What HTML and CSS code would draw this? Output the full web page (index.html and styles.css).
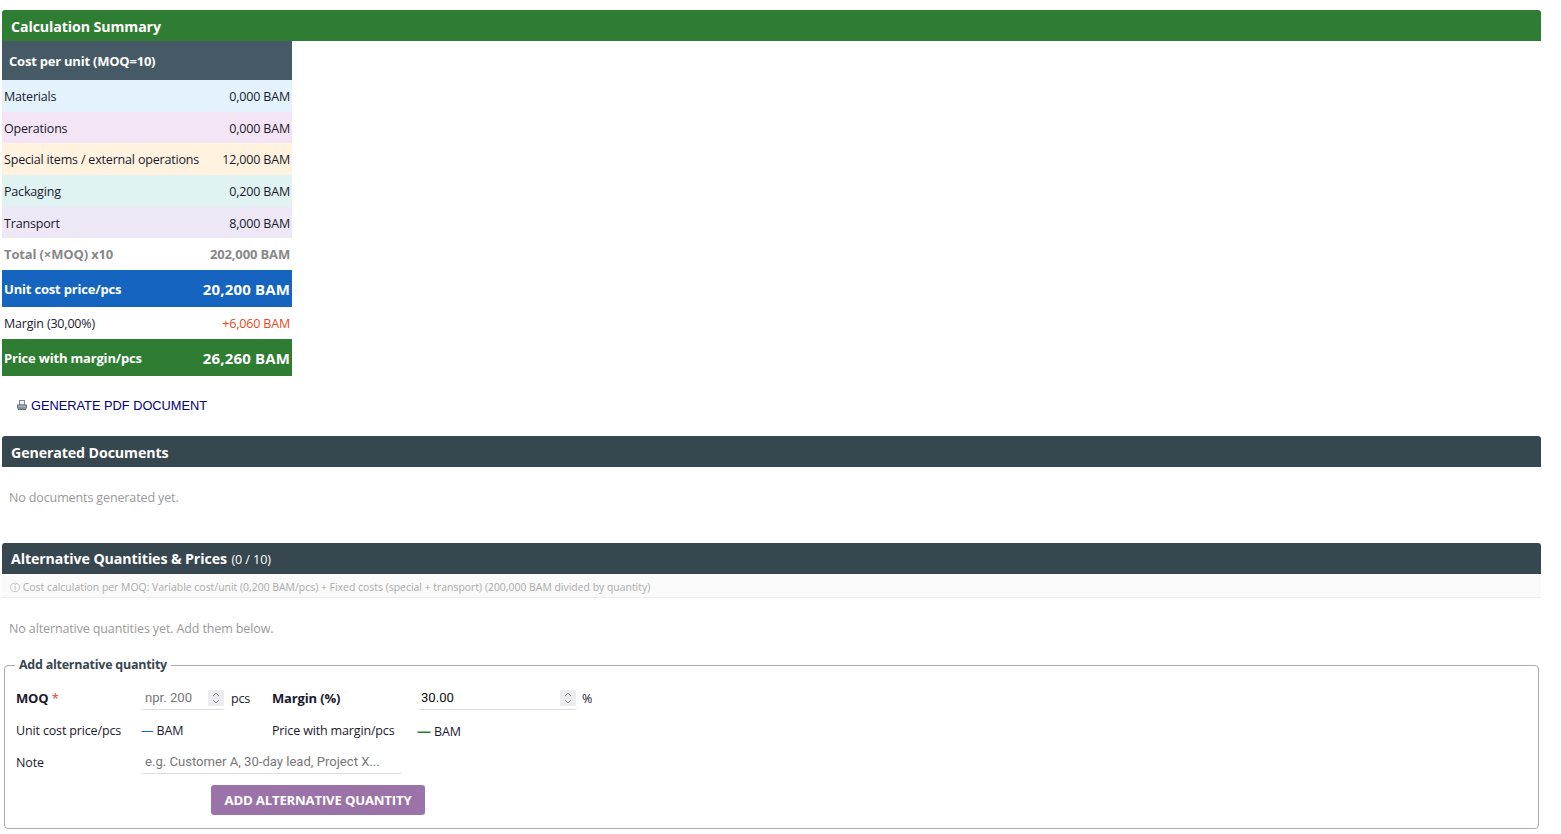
FILE: index.html
```html
<!DOCTYPE html>
<html lang="en">
<head>
    <meta charset="UTF-8">
    <title>Calculation Summary</title>
    <link rel="stylesheet" href="styles.css">
</head>
<body>

    <section class="block">
        <h2 class="head head_green">Calculation Summary</h2>
        <div class="summary">
            <div class="summary_title">Cost per unit (MOQ=10)</div>
            <div class="row c_blue"><span>Materials</span><span>0,000 BAM</span></div>
            <div class="row c_purple"><span>Operations</span><span>0,000 BAM</span></div>
            <div class="row c_orange"><span>Special items / external operations</span><span>12,000 BAM</span></div>
            <div class="row c_teal"><span>Packaging</span><span>0,200 BAM</span></div>
            <div class="row c_violet"><span>Transport</span><span>8,000 BAM</span></div>
            <div class="row total"><span>Total (×MOQ) x10</span><span>202,000 BAM</span></div>
            <div class="row big big_blue"><span>Unit cost price/pcs</span><span class="big_val">20,200 BAM</span></div>
            <div class="row margin"><span>Margin (30,00%)</span><span class="margin_val">+6,060 BAM</span></div>
            <div class="row big big_green"><span>Price with margin/pcs</span><span class="big_val">26,260 BAM</span></div>
        </div>
        <button class="pdf">
            <svg width="10" height="10" viewBox="0 0 10 10">
                <rect x="2.5" y="0.5" width="5" height="4.5" fill="#eef1f5" stroke="#7a8794"/>
                <rect x="0.5" y="5" width="9" height="3" fill="#aab4c0" stroke="#66727f"/>
                <rect x="1" y="8.5" width="8" height="1.5" fill="#5a6673"/>
            </svg>
            GENERATE PDF DOCUMENT
        </button>
    </section>

    <section class="block docs">
        <h2 class="head">Generated Documents</h2>
        <p class="empty">No documents generated yet.</p>
    </section>

    <section class="block alt">
        <h2 class="head">Alternative Quantities &amp; Prices <small>(0 / 10)</small></h2>
        <p class="info">ⓘ Cost calculation per MOQ: Variable cost/unit (0,200 BAM/pcs) + Fixed costs (special + transport) (200,000 BAM divided by quantity)</p>
        <p class="empty empty_alt">No alternative quantities yet. Add them below.</p>

        <fieldset class="add">
            <legend>Add alternative quantity</legend>
            <div class="form">
                <label class="strong">MOQ <i>*</i></label>
                <div class="with_unit with_unit_moq">
                    <div class="field field_moq">
                        <input type="text" placeholder="npr. 200">
                        <span class="spin"><svg width="8" height="12" viewBox="0 0 8 12"><path d="M1 4l3-3 3 3M1 8l3 3 3-3" fill="none" stroke="#8f8f99" stroke-width="1"/></svg></span>
                    </div>
                    <span>pcs</span>
                </div>
                <label class="strong">Margin (%)</label>
                <div class="with_unit">
                    <div class="field field_margin">
                        <input type="text" value="30.00">
                        <span class="spin"><svg width="8" height="12" viewBox="0 0 8 12"><path d="M1 4l3-3 3 3M1 8l3 3 3-3" fill="none" stroke="#8f8f99" stroke-width="1"/></svg></span>
                    </div>
                    <span>%</span>
                </div>

                <label>Unit cost price/pcs</label>
                <div class="calc"><b class="dash">—</b> BAM</div>
                <label>Price with margin/pcs</label>
                <div class="calc"><b class="dash dash_green">—</b> BAM</div>

                <label>Note</label>
                <div class="field field_note">
                    <input type="text" placeholder="e.g. Customer A, 30-day lead, Project X...">
                </div>
            </div>
            <button class="add_btn">ADD ALTERNATIVE QUANTITY</button>
        </fieldset>
    </section>

</body>
</html>
```

FILE: styles.css
```css
html, body{ margin:0; padding:0; background:#fff;}
body{ padding:10px 20px 0 2px; font-family:'Open Sans', 'Noto Sans', sans-serif; font-size:12.5px; color:#1a1a2e;}
h2, p{ margin:0;}
button{ border:0; background:transparent; cursor:pointer;}

.head{
    height:31px; line-height:33px; padding-left:9px;
    background:#37474f; color:#fff;
    font-size:14.2px; font-weight:700; border-radius:3px 3px 0 0;
    letter-spacing:-0.1px;
}
.head small{ font-size:12.6px; font-weight:400; line-height:1; margin-left:1px;}
.head_green{ background:#2e7d32;}

.summary{ width:290px;}
.summary_title{
    height:39px; line-height:41px; padding-left:7px;
    background:#455a64; color:#fff; font-weight:700; font-size:13px; letter-spacing:-0.22px;
}
.row{
    display:flex; justify-content:space-between; align-items:center;
    box-sizing:border-box; height:31.7px; padding:1px 2px 0; letter-spacing:-0.18px;
}
.c_blue{ background:#e3f2fd;}
.c_purple{ background:#f3e5f5;}
.c_orange{ background:#fff3e0;}
.c_teal{ background:#e0f2f1;}
.c_violet{ background:#ede7f6;}
.total{ color:#888; font-weight:700; font-size:13px; padding-top:0; letter-spacing:-0.14px;}
.big{ height:37px; color:#fff; font-weight:700; font-size:13px; padding-top:0;}
.big_blue{ background:#1565c0;}
.big_green{ background:#2e7d32;}
.big_val{ font-size:15px; letter-spacing:0.15px;}
.margin{ height:32px; padding-top:0;}
.margin_val{ color:#e64a19;}

.pdf{
    display:flex; align-items:center; gap:4px;
    margin:19px 0 0 15px; padding:0; height:20px;
    font-family:'Liberation Sans', Arial, sans-serif; font-size:12.8px; color:#000080;
}

.docs{ margin-top:21px;}
.empty{ color:#999; font-size:12.5px; letter-spacing:-0.12px; padding-left:7px;}
.docs .empty{ padding-top:22px; height:54px; box-sizing:border-box;}
.alt{ margin-top:22px;}
.alt .head{ line-height:32px;}

.info{
    height:23px; line-height:27px; padding-left:8px;
    background:#fafafa; border-bottom:1px solid #eee;
    color:#aaa; font-size:10.4px; letter-spacing:0.015px;
}
.empty_alt{ margin-top:22px; line-height:17px;}

.add{
    margin:19px 2px 0 2px; padding:8px 11px 13px 11px;
    border:1px solid #aaa; border-radius:4px; width:auto;
}
.add legend{
    margin-left:-1px; padding:0 4px;
    font-weight:700; font-size:12.5px; line-height:18px; color:#37474f; letter-spacing:-0.25px;
}
.form{
    display:grid; grid-template-columns:125px 131px 145px 1fr;
    grid-auto-rows:32px; align-items:center;
    font-size:12.5px; letter-spacing:-0.15px;
}
.strong{ font-weight:700; font-size:13px;}
.strong i{ color:#e53935; font-style:normal; font-weight:400;}
.with_unit{ display:flex; align-items:center; gap:5px;}
.with_unit_moq{ gap:6px;}
.field{
    display:flex; align-items:center; justify-content:space-between;
    height:23px; border-bottom:1px solid #ddd; border-radius:0 0 3px 3px;
}
.field input{
    flex:1; min-width:0; width:0; height:20px; border:0; outline:0; padding:0 4px; background:transparent;
    font-family:'Roboto', 'Liberation Sans', sans-serif; font-size:13.1px; color:#111;
}
.field input::placeholder{ color:#777;}
.field_moq{ width:84px;}
.field_margin{ width:160px;}
.field_note{ width:261px;}
.spin{
    display:flex; align-items:center; justify-content:center;
    width:16px; height:16px; margin-right:1px; background:#ebebf0;
}
.dash{ color:#1565c0; font-weight:400;}
.dash_green{ color:#2e7d32; font-weight:700; font-size:14px;}
.add_btn{
    display:block; margin:7px 0 0 195px; width:214px; height:30px; padding:0;
    background:#9c73a8; color:#fff; border-radius:3px;
    font-family:'Open Sans', sans-serif; font-weight:700; font-size:13.2px; letter-spacing:-0.2px;
}
```
